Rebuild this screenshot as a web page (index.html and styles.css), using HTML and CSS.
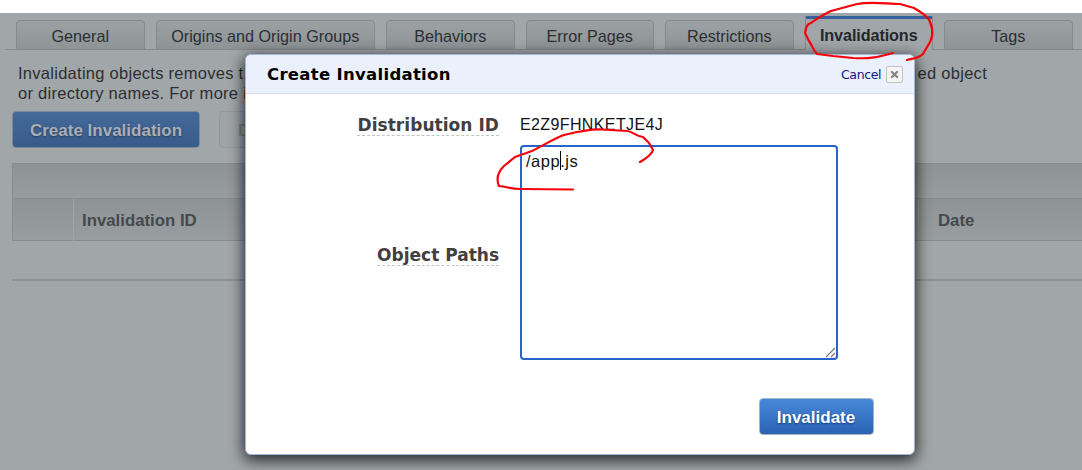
FILE: index.html
```html
<!DOCTYPE html>
<html lang="en">
<head>
<meta charset="utf-8">
<title>Invalidations</title>
<link rel="stylesheet" href="styles.css">
</head>
<body>
<div class="page">
  <nav class="tabs">
    <div class="tab"><span>General</span></div>
    <div class="tab tab-wide"><span>Origins and Origin Groups</span></div>
    <div class="tab"><span>Behaviors</span></div>
    <div class="tab"><span>Error Pages</span></div>
    <div class="tab"><span>Restrictions</span></div>
    <div class="tab tab-active"><span>Invalidations</span></div>
    <div class="tab"><span>Tags</span></div>
  </nav>
  <div class="intro">
    <div class="intro-line"><span>Invalidating objects removes t</span><span>ed object</span></div>
    <div class="intro-line"><span>or directory names. For more i</span></div>
  </div>
  <div class="actions">
    <div class="btn btn-create"><span>Create Invalidation</span></div>
    <div class="btn btn-disabled"><span>D</span></div>
  </div>
  <div class="table">
    <div class="pager"></div>
    <div class="head"><div class="col-check"></div><div class="col-id"><span>Invalidation ID</span></div><div class="col-date"><span>Date</span></div></div>
    <div class="row"></div>
  </div>
</div>
<div class="modal">
  <header class="modal-head">
    <span class="modal-title">Create Invalidation</span>
    <span class="cancel">Cancel</span>
    <span class="close"><svg width="15" height="15" viewBox="0 0 15 15"><path d="M4.200 4.200 10.800 10.800M10.800 4.200 4.200 10.800" stroke="#858585" stroke-width="2.200"/></svg></span>
  </header>
  <div class="form">
    <div class="label label-dist"><span>Distribution ID</span></div>
    <div class="value"><span>E2Z9FHNKETJE4J</span></div>
    <div class="label label-path"><span>Object Paths</span></div>
    <div class="textarea"><span>/app</span><i class="caret"></i><span>.js</span>
      <svg class="grip" width="11" height="11" viewBox="0 0 11 11"><path d="M1 10 10 1M6 10 10 6" stroke="#777" stroke-width="1.100"/></svg>
    </div>
  </div>
  <footer class="modal-foot"><div class="btn btn-go"><span>Invalidate</span></div></footer>
</div>
<svg class="marks" width="1082" height="470" viewBox="0 0 1082 470">
  <path d="M893 53C879 57 870 59 853 58L833 56 817 54C813 50 812 45 809 41L805 33C806 27 807 24 811 23C818 18 822 15 831 11L857 4C872 1 887 4 900 4L914 8C921 12 929 17 930 22C934 31 933 39 927 47L923 54C919 58 915 58 907 60"/>
  <path d="M573 189.500 520 189C511 189 508 187 499 186C496 179 497 173 504 166L515 157 532 151C544 145 555 138 564 135C580 131 590 129 602 129.500L627 131C632 131 635 136 643 137L649 143 653 150C652 154 647 158 640 162"/>
</svg>
</body>
</html>
```
FILE: styles.css
```css
* { box-sizing: border-box; }
body {
  margin: 0;
  width: 1082px;
  height: 470px;
  overflow: hidden;
  position: relative;
  background: #fff;
  padding-top: 13px;
  font: 16.5px/20px "Liberation Sans", Arial, sans-serif;
}
span { white-space: nowrap; }
.page { height: 457px; background: #a1a6a9; color: #2b2f32; overflow: hidden; }
.tabs {
  display: flex;
  align-items: flex-end;
  gap: 11px;
  height: 37px;
  margin-left: 5px;
  padding-left: 11px;
  width: 1090px;
  background: linear-gradient(#868b8e, #868b8e) left bottom / 100% 1px no-repeat;
}
.tab {
  flex: none;
  width: 128.500px;
  height: 30px;
  border: 1px solid #85898c;
  border-radius: 4px 4px 0 0;
  background: linear-gradient(#9ca1a4, #8e9396);
  text-align: center;
  padding-top: 5px;
  font-size: 16.2px;
}
.tab-wide { width: 219.500px; }
.tab-active {
  height: 34px;
  border-top: 3px solid #365f9e;
  border-bottom: 0;
  border-radius: 2px 2px 0 0;
  background: #a1a6a9;
  font-weight: bold;
  color: #23282b;
  padding-top: 6px;
  letter-spacing: -.1px;
}
.intro { padding: 14px 0 0 18px; width: 987px; line-height: 19.500px; letter-spacing: .27px; }
.intro-line { display: flex; justify-content: space-between; }
.actions { display: flex; gap: 19px; padding: 8px 0 0 12px; }
.btn {
  display: flex;
  align-items: center;
  justify-content: center;
  height: 37px;
  border-radius: 4px;
  font-weight: bold;
  font-size: 17px;
  padding-top: 2px;
}
.btn-create {
  width: 188px;
  border: 1px solid #7d8997;
  background: linear-gradient(#446998, #385b8c);
  color: #a9afb5;
  text-shadow: 0 1px 2px #263d5d;
}
.btn-disabled { width: 104px; border: 1px solid #93989b; background: #9ea3a6; color: #7d8285; justify-content: flex-start; padding-left: 18px; }
.table { margin: 15px 0 0 12px; }
.pager { height: 35px; border: 1px solid #878c8f; border-width: 1px 0 0 1px; background: linear-gradient(#8e9396, #979c9f); }
.head {
  display: grid;
  grid-template-columns: 60px 845px 1fr;
  height: 43px;
  border: 1px solid #878c8f;
  border-width: 1px 0 1px 1px;
  background: linear-gradient(#8e9396, #989da0);
  color: #45494c;
  font-weight: bold;
  font-size: 16.800px;
  line-height: 43px;
}
.col-id, .col-date { border-left: 1px solid #a0a5a8; }
.col-id { padding-left: 8px; }
.col-date { padding-left: 19px; }
.row { height: 40px; border-bottom: 2px solid #8c9194; }
.modal {
  position: absolute;
  left: 245px;
  top: 54px;
  width: 669.500px;
  height: 401px;
  background: #fff;
  border: 1px solid #9dbbd8;
  border-radius: 6px;
  box-shadow: 0 4px 15px 1px rgba(0, 0, 0, .8);
  display: flex;
  flex-direction: column;
}
.modal-head {
  display: flex;
  align-items: center;
  height: 39px;
  background: #eaf1fd;
  border-bottom: 1px solid #cfdef0;
  border-radius: 5px 5px 0 0;
  padding: 0 11px 0 21px;
  font-family: "DejaVu Sans", Verdana, sans-serif;
}
.modal-title { font-size: 16.500px; font-weight: bold; flex: 1; letter-spacing: .3px; padding-top: 2px; }
.cancel { font-size: 12.500px; color: #15158a; margin-right: 4.500px; letter-spacing: -.4px; padding-top: 2px; }
.close { display: flex; width: 17px; height: 17px; border: 1px solid #c2c2c2; border-radius: 2px; background: #f4f4f4; }
.form {
  display: grid;
  grid-template-columns: 253px 318px;
  grid-template-rows: 51px 215px;
  column-gap: 21px;
}
.label {
  display: flex;
  justify-content: flex-end;
  font: bold 17px/20px "DejaVu Sans", Verdana, sans-serif;
  color: #404040;
}
.label span { height: 21px; border-bottom: 1px dashed #c4c4c4; }
.label-dist { padding-top: 21px; letter-spacing: .05px; }
.label-path { padding-top: 100px; }
.value { padding-top: 21px; font-size: 16px; letter-spacing: .38px; color: #111; }
.textarea {
  position: relative;
  display: flex;
  align-items: flex-start;
  border: 2px solid #2763c9;
  border-radius: 4px;
  padding: 4px;
  color: #111;
  letter-spacing: .5px;
}
.caret { width: 1px; height: 19px; background: #000; margin: 0 -1px 0 0; }
.grip { position: absolute; right: 0; bottom: 0; fill: none; }
.modal-foot { display: flex; justify-content: flex-end; padding: 38px 40px 0 0; }
.btn-go {
  width: 115px;
  border: 1px solid #a8b2c4;
  background: linear-gradient(#4788d8, #2b63b3);
  color: #fff;
  text-shadow: 0 1px 2px #173d75;
}
.marks { position: absolute; left: 0; top: 0; fill: none; stroke: #f80009; stroke-width: 2.200px; stroke-linecap: round; stroke-linejoin: round; }
```
